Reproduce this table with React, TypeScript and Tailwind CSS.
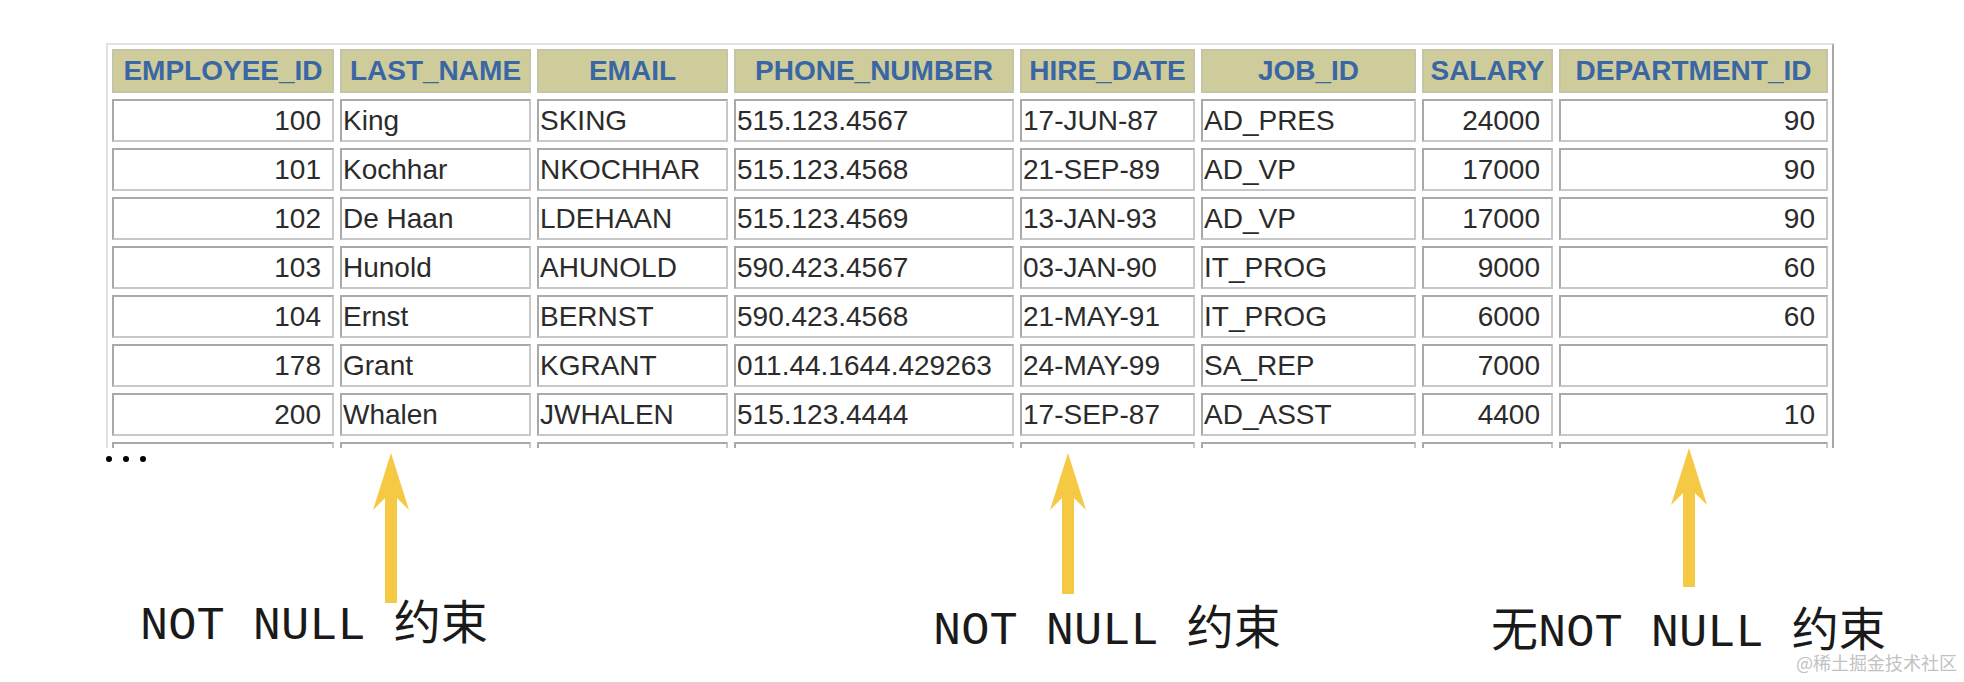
import React from "react";

const headers = [
  "EMPLOYEE_ID",
  "LAST_NAME",
  "EMAIL",
  "PHONE_NUMBER",
  "HIRE_DATE",
  "JOB_ID",
  "SALARY",
  "DEPARTMENT_ID",
];

const rows: string[][] = [
  ["100", "King", "SKING", "515.123.4567", "17-JUN-87", "AD_PRES", "24000", "90"],
  ["101", "Kochhar", "NKOCHHAR", "515.123.4568", "21-SEP-89", "AD_VP", "17000", "90"],
  ["102", "De Haan", "LDEHAAN", "515.123.4569", "13-JAN-93", "AD_VP", "17000", "90"],
  ["103", "Hunold", "AHUNOLD", "590.423.4567", "03-JAN-90", "IT_PROG", "9000", "60"],
  ["104", "Ernst", "BERNST", "590.423.4568", "21-MAY-91", "IT_PROG", "6000", "60"],
  ["178", "Grant", "KGRANT", "011.44.1644.429263", "24-MAY-99", "SA_REP", "7000", ""],
  ["200", "Whalen", "JWHALEN", "515.123.4444", "17-SEP-87", "AD_ASST", "4400", "10"],
  ["", "", "", "", "", "", "", ""],
];

const rightAligned = [true, false, false, false, false, false, true, true];

function Arrow({ h }: { h: number }) {
  return (
    <svg width={36} height={h} viewBox={`0 0 36 ${h}`} className="block">
      <polygon
        points={`18,0 36,57 24,45 24,${h} 12,${h} 12,45 0,57`}
        fill="#f6c945"
      />
    </svg>
  );
}

export default function App() {
  return (
    <div className="relative w-[1964px] h-[682px] bg-white overflow-hidden">
      {/* Table */}
      <div className="ml-[106px] mt-[43px] w-[1728px] h-[405px] overflow-hidden border-t-2 border-l-2 border-r-2 border-t-[#e2e2e2] border-l-[#e2e2e2] border-r-[#a8a8a8] pt-[4px] pl-[4px]">
        <div className="grid grid-cols-[222px_191px_191px_280px_175px_215px_131px_269px] grid-rows-[44px_repeat(8,43px)] gap-x-[6px] gap-y-[6px]">
          {headers.map((h) => (
            <div
              key={h}
              className="flex items-center justify-center bg-[#cfcc9c] border-2 border-[#c6c4a6] text-[#3a67a4] font-bold text-[28px] leading-none whitespace-nowrap overflow-hidden"
              style={{ fontFamily: '"Liberation Sans", Arial, sans-serif' }}
            >
              {h}
            </div>
          ))}
          {rows.map((r, ri) =>
            r.map((c, ci) => (
              <div
                key={`${ri}-${ci}`}
                className={
                  "flex items-center bg-white border-2 border-t-[#a9a9a9] border-l-[#a9a9a9] border-b-[#c8c8c8] border-r-[#c8c8c8] text-[#2b2b2b] text-[28px] leading-none whitespace-nowrap overflow-hidden " +
                  (rightAligned[ci] ? "justify-end pr-[11px]" : "justify-start pl-[1px]")
                }
                style={{ fontFamily: '"Liberation Sans", Arial, sans-serif' }}
              >
                {c}
              </div>
            ))
          )}
        </div>
      </div>

      {/* Arrow row */}
      <div className="flex items-start h-[155px]">
        <div className="w-[373px] pl-[106px] pt-[8px]">
          <div className="flex gap-[11px]">
            <div className="w-[6px] h-[6px] rounded-full bg-black" />
            <div className="w-[6px] h-[6px] rounded-full bg-black" />
            <div className="w-[6px] h-[6px] rounded-full bg-black" />
          </div>
        </div>
        <div className="w-[677px] pt-[5px]">
          <Arrow h={150} />
        </div>
        <div className="w-[621px] pt-[5px]">
          <Arrow h={141} />
        </div>
        <div className="pt-[0px]">
          <Arrow h={139} />
        </div>
      </div>

      {/* Label row */}
      <div
        className="flex items-start text-[47px] leading-[40px] text-[#1a1a1a] whitespace-pre"
        style={{ fontFamily: '"Courier New", "Nimbus Mono PS", FreeMono, "Liberation Mono", "Noto Sans CJK SC", monospace' }}
      >
        <div className="w-[933px] pl-[140px] pt-[4px]">NOT NULL 约束</div>
        <div className="w-[558px] pt-[9px]">NOT NULL 约束</div>
        <div className="pt-[11px]">无NOT NULL 约束</div>
      </div>

      {/* Watermark */}
      <div
        className="absolute right-[7px] bottom-[11px] text-[18px] leading-none text-[#c2c2c2]"
        style={{ fontFamily: '"Noto Sans CJK SC", sans-serif' }}
      >
        @稀土掘金技术社区
      </div>
    </div>
  );
}
